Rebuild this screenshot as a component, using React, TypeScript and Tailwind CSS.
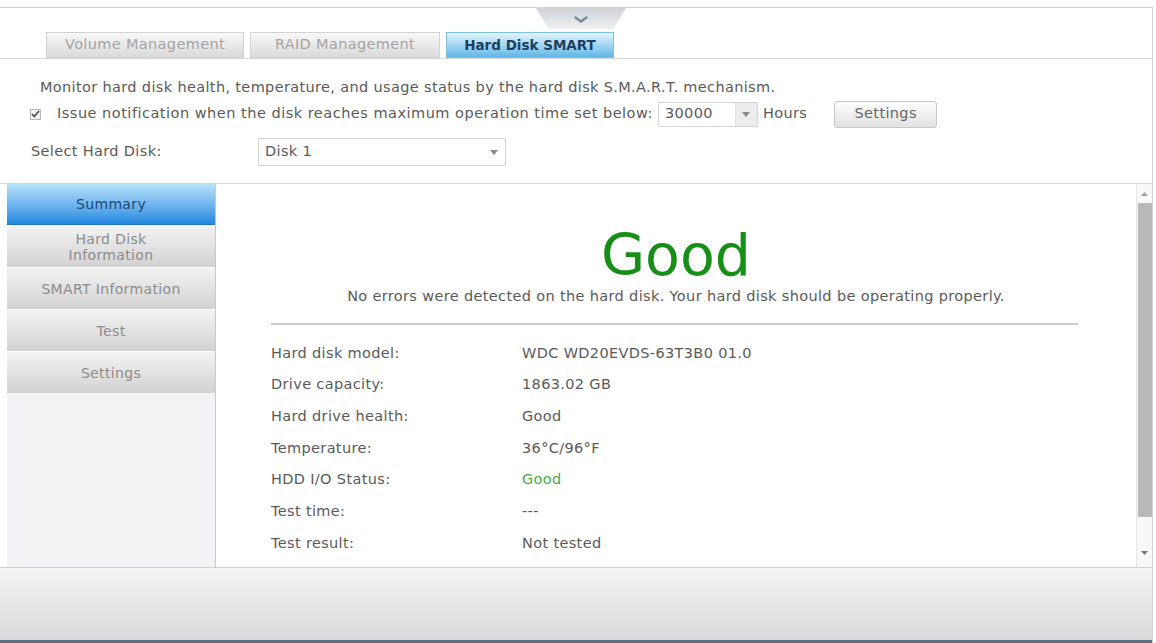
import React from "react";

const tabs = [
  { label: "Volume Management", width: "w-[198px]", active: false },
  { label: "RAID Management", width: "w-[190px]", active: false },
  { label: "Hard Disk SMART", width: "w-[168px]", active: true },
];

const navItems: { label: React.ReactNode; key: string; active: boolean }[] = [
  { key: "summary", label: "Summary", active: true },
  {
    key: "info",
    label: (
      <>
        Hard Disk
        <br />
        Information
      </>
    ),
    active: false,
  },
  { key: "smart", label: "SMART Information", active: false },
  { key: "test", label: "Test", active: false },
  { key: "settings", label: "Settings", active: false },
];

const rows: { label: string; value: string; green?: boolean }[] = [
  { label: "Hard disk model:", value: "WDC WD20EVDS-63T3B0 01.0" },
  { label: "Drive capacity:", value: "1863.02 GB" },
  { label: "Hard drive health:", value: "Good" },
  { label: "Temperature:", value: "36°C/96°F" },
  { label: "HDD I/O Status:", value: "Good", green: true },
  { label: "Test time:", value: "---" },
  { label: "Test result:", value: "Not tested" },
];

function Caret() {
  return (
    <svg width="8" height="5" viewBox="0 0 8 5">
      <path d="M0 0h8L4 5z" fill="#8a8a8a" />
    </svg>
  );
}

function Scrollbar() {
  return (
    <div className="flex w-[16px] flex-col items-center border-l border-[#e6e6e6] bg-[#f8f8f8]">
      <div className="flex h-[19px] items-center justify-center">
        <svg width="7" height="4" viewBox="0 0 7 4">
          <path d="M0 4h7L3.5 0z" fill="#a0a0a0" />
        </svg>
      </div>
      <div className="h-[314px] w-[14px] bg-[#b9b9b9]" />
      <div className="flex flex-1 items-end justify-center pb-[12px]">
        <svg width="7" height="4" viewBox="0 0 7 4">
          <path d="M0 0h7L3.5 4z" fill="#777" />
        </svg>
      </div>
    </div>
  );
}

export default function App() {
  return (
    <div
      className="flex h-[643px] w-[1156px] flex-col overflow-hidden bg-white text-[#5a5a5a] tracking-[0.35px]"
      style={{ fontFamily: '"DejaVu Sans", Verdana, sans-serif' }}
    >
      <div className="h-[7px] shrink-0" />
      <div className="mr-[3px] flex flex-1 flex-col border-t border-r border-[#d2d2d2]">
        {/* tab strip */}
        <div className="relative flex h-[51px] shrink-0 items-end gap-[6px] border-b border-[#d6d6d6] pl-[46px]">
          <div className="absolute left-[536px] top-0 flex h-[21px] w-[90px] items-center justify-center bg-gradient-to-b from-[#cfd3d7] to-[#eef0f2] [clip-path:polygon(0_0,100%_0,86%_100%,14%_100%)]">
            <svg width="16" height="8" viewBox="0 0 16 8" className="mt-[3px]">
              <path d="M2.5 1.5l5.5 4 5.5-4" fill="none" stroke="#7a8896" strokeWidth="2.4" strokeLinecap="round" />
            </svg>
          </div>
          {tabs.map((t) =>
            t.active ? (
              <div
                key={t.label}
                className={`${t.width} flex h-[26px] items-center justify-center border border-[#7cc0e4] bg-gradient-to-b from-[#e2f5fe] to-[#5fb7e7] text-[13.5px] font-bold tracking-normal text-[#1d3f5e]`}
              >
                {t.label}
              </div>
            ) : (
              <div
                key={t.label}
                className={`${t.width} flex h-[26px] items-center justify-center border border-[#d2d2d2] bg-gradient-to-b from-[#f8f8f8] to-[#dadada] text-[14.5px] text-[#a4a4a4]`}
              >
                {t.label}
              </div>
            )
          )}
        </div>

        {/* options */}
        <div className="flex h-[124px] shrink-0 flex-col text-[14.5px]">
          <div className="ml-[40px] mt-[19px] leading-[18px]">
            Monitor hard disk health, temperature, and usage status by the hard disk S.M.A.R.T. mechanism.
          </div>
          <div className="mt-[4px] flex h-[28px] items-center">
            <div className="ml-[30px] flex h-[11px] w-[11px] items-center justify-center border border-[#b8b8b8] bg-[#f1f1f1]">
              <svg width="9" height="8" viewBox="0 0 9 8">
                <path d="M1 4.2l2.3 2.3L8 1" fill="none" stroke="#555" strokeWidth="1.8" />
              </svg>
            </div>
            <span className="ml-[16px] tracking-[0.5px]">
              Issue notification when the disk reaches maximum operation time set below:
            </span>
            <div className="ml-[5px] flex h-[25px] w-[100px] border border-[#d6d6d6] bg-white">
              <span className="flex flex-1 items-center pl-[6px]">30000</span>
              <span className="flex w-[22px] items-center justify-center border-l border-[#e0e0e0] bg-[#ececec]">
                <Caret />
              </span>
            </div>
            <span className="ml-[5px]">Hours</span>
            <button className="ml-[27px] flex h-[27px] w-[103px] items-center justify-center rounded-[3px] border border-[#c8c8c8] bg-gradient-to-b from-[#fcfcfc] to-[#e2e2e2] text-[14.5px] text-[#666]">
              Settings
            </button>
          </div>
          <div className="mt-[10px] flex h-[28px] items-center">
            <span className="ml-[31px] w-[227px]">Select Hard Disk:</span>
            <div className="flex h-[28px] w-[248px] border border-[#d6d6d6] bg-white">
              <span className="flex flex-1 items-center pl-[6px]">Disk 1</span>
              <span className="flex w-[22px] items-center justify-center">
                <Caret />
              </span>
            </div>
          </div>
        </div>

        {/* panel */}
        <div className="flex h-[384px] shrink-0 border-t border-[#d6d6d6]">
          <div className="ml-[7px] flex w-[209px] flex-col border-r border-[#c9c9c9] bg-[#f3f3f6]">
            {navItems.map((n) =>
              n.active ? (
                <div
                  key={n.key}
                  className="flex h-[41px] items-center justify-center border-b border-[#1a78c4] bg-gradient-to-b from-[#b7e2fa] to-[#1c88df] text-[14px] text-[#1b4876]"
                >
                  {n.label}
                </div>
              ) : (
                <div
                  key={n.key}
                  className="flex h-[42px] items-center justify-center border-t border-white bg-gradient-to-b from-[#f3f3f3] to-[#d2d2d2] text-center text-[14px] leading-[16px] text-[#8c8c8c]"
                >
                  {n.label}
                </div>
              )
            )}
          </div>

          <div className="flex flex-1 flex-col items-stretch bg-white">
            <div className="mt-[41px] text-center text-[57px] leading-[60px] tracking-normal text-[#178f17]">Good</div>
            <div className="mt-[1px] text-center text-[14.5px]">
              No errors were detected on the hard disk. Your hard disk should be operating properly.
            </div>
            <div className="ml-[55px] mr-[58px] mt-[15px] h-[2px] bg-[#cacaca]" />
            <div className="ml-[55px] mt-[13px] flex flex-col">
              {rows.map((r) => (
                <div key={r.label} className="flex h-[31.7px] items-center text-[14.5px]">
                  <span className="w-[251px]">{r.label}</span>
                  <span className={r.green ? "text-[#45ad45]" : ""}>{r.value}</span>
                </div>
              ))}
            </div>
          </div>
          <Scrollbar />
        </div>

        {/* footer */}
        <div className="flex-1 border-t border-[#d0d0d0] bg-gradient-to-b from-[#f4f4f4] to-[#d9d9d9]" />
        <div className="h-[3px] shrink-0 bg-[#5c6d7c]" />
      </div>
    </div>
  );
}
